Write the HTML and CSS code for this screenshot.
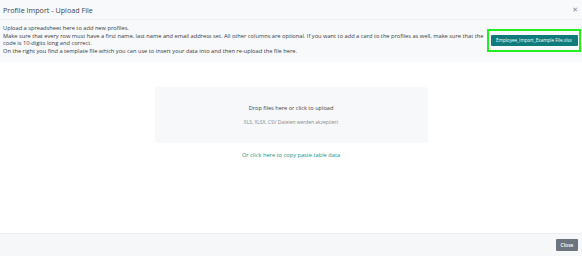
FILE: index.html
```html
<!DOCTYPE html>
<html lang="en">
<head>
    <meta charset="UTF-8">
    <meta name="viewport" content="width=device-width, initial-scale=1.0">
    <title>Profile Import</title>
    <link rel="stylesheet" href="styles.css">
</head>
<body>
    <div class="modal">
        <div class="modal-header">
            <h5 class="modal-title">Profile Import - Upload File</h5>
            <span class="close-x">&#x2715;</span>
        </div>

        <div class="intro">
            <div class="intro-text">
                Upload a spreadsheet here to add new profiles.<br>
                Make sure that every row must have a first name, last name and email address set. All other columns are optional. If you want to add a card to the profiles as well, make sure that the code is 10-digits long and correct.<br>
                On the right you find a template file which you can use to insert your data into and then re-upload the file here.
            </div>
            <div class="template-box">
                <button class="template-btn">Employee_Import_Example File.xlsx</button>
            </div>
        </div>

        <div class="modal-body">
            <div class="dropzone">
                <div class="drop-title">Drop files here or click to upload</div>
                <div class="drop-hint">XLS, XLSX, CSV Dateien werden akzeptiert</div>
            </div>
            <a class="paste-link" href="#">Or click here to copy paste table data</a>
        </div>

        <div class="modal-footer">
            <button class="btn-close">Close</button>
        </div>
    </div>
</body>
</html>
```

FILE: styles.css
```css
body {
    margin: 0;
    font-family: "Open Sans", "DejaVu Sans", sans-serif;
    color: #333;
    background-color: #fff;
}

.modal {
    display: flex;
    flex-direction: column;
    height: 256px;
}

.modal-header {
    display: flex;
    align-items: center;
    justify-content: space-between;
    height: 19px;
    padding: 0 4px 0 3px;
    background-color: #f8f9fb;
    border-bottom: 1px solid #eef0f3;
}

.modal-title {
    margin: 0;
    font-size: 7.2px;
    font-weight: 400;
    color: #444;
}

.close-x {
    font-size: 7px;
    color: #888;
}

.intro {
    display: flex;
    align-items: center;
    gap: 2px;
    padding: 5px 1px 6px 3px;
    background-color: #f8f9fb;
}

.intro-text {
    flex: 1;
    font-size: 5.7px;
    line-height: 7.7px;
    color: #3a3a3a;
}

.template-box {
    width: 90px;
    height: 19px;
    border: 2px solid #22ee22;
    display: flex;
    align-items: center;
    justify-content: center;
}

.template-btn {
    border: none;
    border-radius: 1px;
    background-color: #0f7b7b;
    color: #fff;
    font-family: inherit;
    font-size: 4.6px;
    height: 11px;
    width: 87px;
    padding: 0;
}

.modal-body {
    flex: 1;
    display: flex;
    flex-direction: column;
    align-items: center;
    padding-top: 25px;
}

.dropzone {
    width: 273px;
    height: 56px;
    background-color: #f7f8fa;
    border-radius: 3px;
    display: flex;
    flex-direction: column;
    align-items: center;
    justify-content: center;
    gap: 7px;
}

.drop-title {
    font-size: 5.6px;
    color: #444;
}

.drop-hint {
    font-size: 4.9px;
    color: #888;
}

.paste-link {
    margin-top: 8px;
    font-size: 5.7px;
    color: #1a9688;
    text-decoration: none;
}

.modal-footer {
    display: flex;
    justify-content: flex-end;
    align-items: center;
    height: 22px;
    padding-right: 4px;
    background-color: #f6f7f9;
    border-top: 1px solid #eceef1;
}

.btn-close {
    width: 22px;
    height: 12px;
    padding: 0;
    border: none;
    border-radius: 1px;
    background-color: #6c757d;
    color: #fff;
    font-family: inherit;
    font-size: 5px;
    font-weight: 600;
}
```
